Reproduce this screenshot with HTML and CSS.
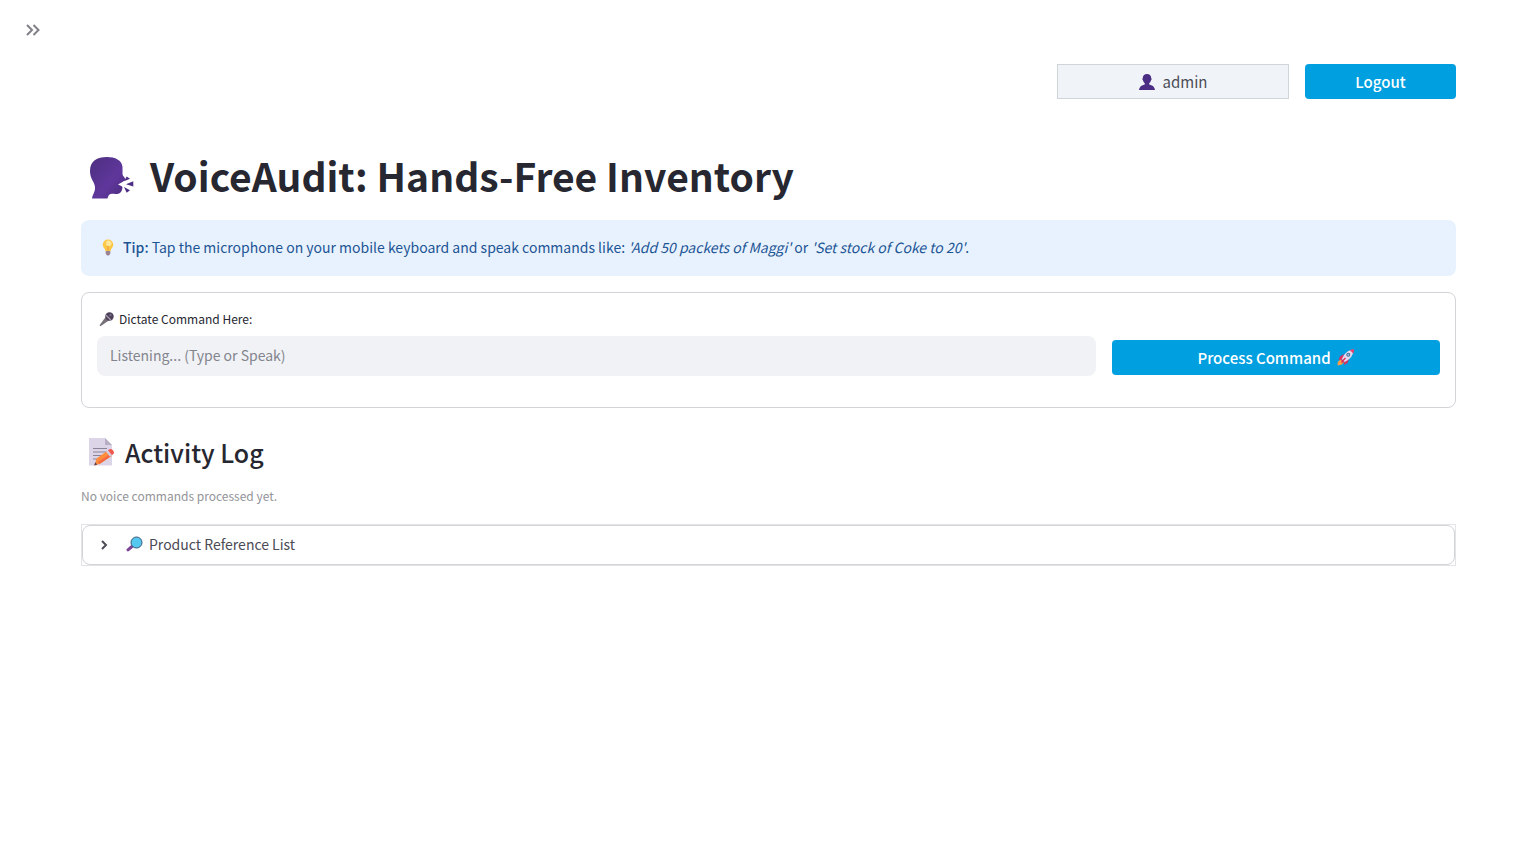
FILE: index.html
```html
<!DOCTYPE html>
<html lang="en">
<head>
  <meta charset="UTF-8">
  <title>VoiceAudit: Hands-Free Inventory</title>
  <meta name="viewport" content="width=device-width, initial-scale=1.0">
  <link rel="stylesheet" href="styles.css">
</head>
<body>
  <header class="toolbar">
    <button class="sidebar-toggle" type="button" aria-label="Open sidebar">
      <svg width="20" height="20" viewBox="0 0 20 20"><path d="M4 5l5 5-5 5M10.500 5l5 5-5 5"/></svg>
    </button>
  </header>

  <main class="container">
    <div class="user-row">
      <div class="user-badge">
        <svg width="16" height="16" viewBox="0 0 16 16">
          <path fill="#4b2d83" d="M8 0c2.800 0 4.300 1.800 4.200 4.300.7.200.5 1.700-.2 2-.3 1.500-.9 2.300-1.800 3v1.100c2.500.8 5.300 1.600 5.800 5.600H0c.5-4 3.300-4.800 5.800-5.600V9.300c-.9-.7-1.500-1.500-1.800-3-.7-.3-.9-1.800-.2-2C3.700 1.800 5.200 0 8 0z"/>
        </svg>
        <span>admin</span>
      </div>
      <button class="btn" type="button">Logout</button>
    </div>

    <h1>
      <svg width="45" height="44" viewBox="0 0 45 44">
        <defs>
          <linearGradient id="head" x1="0" y1="0" x2="1" y2="1">
            <stop offset="0" stop-color="#4d2f80"/>
            <stop offset=".6" stop-color="#5f379c"/>
            <stop offset="1" stop-color="#4a2b7c"/>
          </linearGradient>
        </defs>
        <path fill="url(#head)" d="M1 15C1 5 8 1 18 1c8 0 15 3 15.500 10v7c0 2 2.800 3.500 2.800 5.500 0 1.500-2.500 1.500-2.800 2.500l-4.500 2.500 3.800 1.700c1.200.5.6 2.800-.3 4.800-1 2.500-3.500 3-6 3-2.500 0-4.500-.8-6 .5-1 .9-1.500 2.300-2 4H3c.5-4 3.500-7 3-11.500C5.700 26 1 23 1 15z"/>
        <path fill="#4b2d83" d="M35 25.200l2.700-4.700 3.300 2.200zM37 28.200l7.300-3v5.300zM35 31l6 3.300-3.300 2.500z"/>
      </svg>
      <span>VoiceAudit: Hands-Free Inventory</span>
    </h1>

    <div class="alert">
      <svg width="12" height="17" viewBox="0 0 12 17">
        <path fill="#fcc846" d="M6 .5a5.200 5.200 0 0 1 5.300 5.200c0 2.600-2.300 3.600-2.800 6.300h-5C3 9.300.7 8.300.7 5.700A5.200 5.200 0 0 1 6 .5z"/>
        <path fill="#ffe69a" d="M6 1.500c2 0 3.500 1 3.500 3S8 7 6.500 7 4 6 4 4.500 4.500 1.500 6 1.500z"/>
        <path fill="#f0aa40" d="M5.200 7h1.600v4.500H5.200z"/>
        <path fill="#998497" d="M3.700 12h4.600v2.500L7 16.500H5l-1.300-2z"/>
      </svg>
      <p><strong>Tip:</strong> Tap the microphone on your mobile keyboard and speak commands like: <em>'Add 50 packets of Maggi'</em> or <em>'Set stock of Coke to 20'</em>.</p>
    </div>

    <form class="command-form">
      <div class="field">
        <label for="command">
          <svg width="15" height="15" viewBox="0 0 15 15">
            <path fill="#777079" d="M7 4.500l3.500 3.500L1.500 14.300.5 13.300z"/>
            <circle cx="10.500" cy="4.500" r="4.200" fill="#4c4158"/>
            <path d="M7 3.200l4.800 4.800" stroke="#a89fb2" stroke-width="1.300"/>
            <circle cx="11.500" cy="3" r="1.200" fill="#76698a"/>
          </svg>
          Dictate Command Here:
        </label>
        <input type="text" id="command" placeholder="Listening... (Type or Speak)">
      </div>
      <button class="btn" type="submit">
        Process Command
        <svg width="18" height="17" viewBox="0 0 18 17">
          <path fill="#ff9d42" d="M4 10L.800 13l-.3 3.500L5 15.500 7 13z"/>
          <path fill="#d92f60" d="M7 5L3 7.500 1.500 11l4-1zM12 10l-1.500 4L7 16l.5-4zM4.500 10l3 3-3 1z"/>
          <path fill="#e3d8eb" d="M16.500.5c-5 .2-8.500 3-11.700 9.500l3 3C13.500 10 16.500 6 16.500.5z"/>
          <path fill="#e83b67" d="M17 .3c-1.600 0-3 .3-4.200.8l3.400 3.300C16.800 3.200 17 1.800 17 .3z"/>
          <circle cx="11.300" cy="5.800" r="2" fill="#48739c"/>
          <circle cx="11.300" cy="5.800" r="1" fill="#8dbde2"/>
          <path d="M5 12.500L8.500 9" stroke="#d92f60" stroke-width="1.400"/>
        </svg>
      </button>
    </form>

    <h3>
      <svg width="27" height="28" viewBox="0 0 27 28">
        <path fill="#dcd5e8" d="M1 0h16l7 7v20.500H1z"/>
        <path fill="#b7adc4" d="M17 0l7 7h-7z"/>
        <path d="M5 10.500h14M5 14h14M5 17.500h12M5 21h7" stroke="#8b8398" stroke-width="1"/>
        <path fill="#ff8d3c" d="M8.500 20.500L19 13l4.500 5-12 8-5 1.500z"/>
        <path fill="#f4693f" d="M10 24l12-8 1.500 2-12 8z"/>
        <path fill="#d5ccdf" d="M18 13.700l1.800-1.300 4 5-1.800 1.300z"/>
        <path fill="#f1584c" d="M20 12.300l2-1.300c1.800-.4 4.200 2 4 4.200l-2 2z"/>
        <path fill="#5a3b50" d="M7.200 24.300l2 2.200-3 1z"/>
      </svg>
      <span>Activity Log</span>
    </h3>
    <p class="caption">No voice commands processed yet.</p>

    <div class="expander">
      <details>
        <summary>
          <svg class="chevron" width="20" height="20" viewBox="0 0 20 20"><path d="M8 7l4 4-4 4"/></svg>
          <svg width="17" height="16" viewBox="0 0 17 16">
            <path d="M2 13.800L6 10.500" stroke="#7c4495" stroke-width="3" stroke-linecap="round"/>
            <circle cx="10.500" cy="6.500" r="5.500" fill="#55c8ef" stroke="#3a5575" stroke-width="1"/>
          </svg>
          <span>Product Reference List</span>
        </summary>
      </details>
    </div>
  </main>
</body>
</html>
```
FILE: styles.css
```css
* { box-sizing: border-box; }
body {
  margin: 0; background: #fff; color: #262730;
  font-family: "Noto Sans CJK SC", "Open Sans", sans-serif;
  font-size: 14px; line-height: 24px;
}
h1, h3, p { margin: 0; }
svg { flex: none; }

.toolbar { height: 60px; padding: 16px 19px; }
.sidebar-toggle {
  display: flex; padding: 4px; border: none;
  background: none; cursor: pointer;
}
.sidebar-toggle path, .chevron path {
  fill: none; stroke: #808188; stroke-width: 2;
}

.container { padding: 4px 80px 80px 81px; }

.user-row {
  display: grid; grid-template-columns: 1fr 232px 151px; gap: 16px;
}
.user-badge {
  grid-column: 2; height: 35px;
  display: flex; align-items: center; justify-content: center; gap: 8px;
  background: #f0f4f8; border: 1px solid #d0d5d9;
  color: #4a4b55; font-size: 15px;
}
.btn {
  display: flex; align-items: center; justify-content: center; gap: 6px;
  height: 35px; padding: 0 12px;
  background: #009fdf; color: #fff;
  border: none; border-radius: 4px; cursor: pointer;
  font-family: inherit; font-size: 15px; font-weight: 500;
}

h1 {
  display: flex; align-items: center; gap: 16px;
  margin-top: 48px; padding: 4px 0 16px 8px;
  font-size: 39px; line-height: 53px; font-weight: 700;
}
h1 span { padding-bottom: 4px; line-height: 49px; }

.alert {
  display: flex; align-items: center; gap: 9px;
  padding: 15px 21px 17px; border-radius: 8px;
  background: #e8f2ff; color: #1d5594;
}
.alert strong { font-weight: 500; }

.command-form {
  display: grid; grid-template-columns: 1fr 328px; gap: 16px;
  margin-top: 16px; padding: 14px 15px 31px;
  border: 1px solid #d3d4d8; border-radius: 8px;
}
.command-form .btn { margin-top: 33px; }
.field label {
  display: flex; align-items: center; gap: 5px;
  padding-left: 2px; margin-bottom: 5px;
  font-size: 12px;
}
.field input {
  display: block; width: 100%; height: 40px; padding: 0 13px 2px;
  border: none; border-radius: 8px;
  background: #f0f2f6; color: #262730;
  font-family: inherit; font-size: 14px;
}
.field input::placeholder { color: #83858d; }

h3 {
  display: flex; align-items: center; gap: 10px;
  margin-top: 16px; padding: 11px 0 17px 7px;
  font-size: 25px; line-height: 34px; font-weight: 500;
}
.caption { margin-top: -2px; color: #939499; font-size: 12px; }

.expander { margin-top: 16px; border: 1px solid #e3e4e6; }
details { border: 1px solid #d3d4d8; border-radius: 8px; }
summary {
  display: flex; align-items: center; gap: 6px;
  height: 38px; padding: 0 11px 2px;
  list-style: none; cursor: pointer; color: #4a4b55;
}
.chevron { margin-right: 6px; }
.chevron path { stroke: #4a4b55; }
details[open] .chevron { transform: rotate(90deg); }
```
